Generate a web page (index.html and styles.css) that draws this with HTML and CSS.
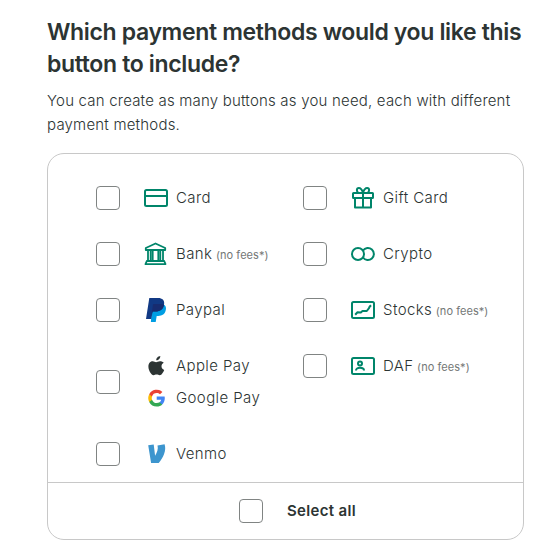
FILE: index.html
```html
<!DOCTYPE html>
<html lang="en">
<head>
  <meta charset="UTF-8" />
  <meta name="viewport" content="width=device-width, initial-scale=1" />
  <title>Payment methods</title>
  <link rel="stylesheet" href="styles.css">
</head>
<body>

  <h1>Which payment methods would you like this button to include?</h1>
  <p class="intro">You can create as many buttons as you need, each with different payment methods.</p>

  <form class="methods-box">
    <div class="methods">

      <!-- Left column -->
      <div class="column">
        <label class="method">
          <input type="checkbox" name="card">
          <span class="option">
            <svg class="icon line" viewBox="0 0 24 24"><rect x="1" y="4" width="22" height="16" rx="1.5"/><path d="M1 10h22"/></svg>
            <span class="name">Card</span>
          </span>
        </label>

        <label class="method">
          <input type="checkbox" name="bank">
          <span class="option">
            <svg class="icon line thin" viewBox="0 0 24 24"><path d="M11.500 1.500 21.200 6v2H1.800V6z"/><path d="M4 8v11M6.700 8v11M16.300 8v11M19 8v11M8.700 8.500v10M14.300 8.500v10"/><path d="M2.800 19h17.400l1.300 3.200h-20z"/></svg>
            <span class="name">Bank <small>(no fees*)</small></span>
          </span>
        </label>

        <label class="method">
          <input type="checkbox" name="paypal">
          <span class="option">
            <svg class="icon" viewBox="0 0 24 24">
              <path fill="#009ee3" d="M8 7h12.500c1.400 1.200 1.800 2.900 1.300 5.100-.9 4.100-3.500 5.900-7.500 5.900h-1.600l-1 6H6.900z"/>
              <path fill="#113984" d="M5.300 0h8.900c4 0 6.500 2.200 5.900 6.200-.7 4.800-3.900 7.300-8.600 7.300H8.700L7.200 21H2z"/>
              <path fill="#172c70" d="M8.900 6.900c.1-.6.500-.9 1.100-.9h6.400c1.400 0 2.600.2 3.700.7-.8 4.500-3.900 6.800-8.600 6.800H8.700L7.700 16z"/>
            </svg>
            <span class="name">Paypal</span>
          </span>
        </label>

        <label class="method">
          <input type="checkbox" name="mobile-pay">
          <span class="pair">
            <span class="option">
              <svg class="icon" viewBox="0 0 24 24"><path fill="#2c3433" d="M16.300 2c.2 2.200-1.800 4.400-4 4.300-.2-2.100 1.800-4.200 4-4.300zM19.700 8.700c-1.500.9-2.200 2-2.200 3.500 0 1.800 1 3 2.700 3.800-.4 1.200-1 2.300-1.800 3.300-.7 1-1.500 2-2.700 2-1.200 0-1.700-.7-3.100-.7s-1.900.7-3.100.7c-1.200 0-2.200-1.200-2.900-2.300C5.200 17 4.400 14.700 4.400 12.500c0-3.400 2.200-5.200 4.300-5.200 1.400 0 2.400.9 3.400.9.900 0 2.100-1 3.900-1 1.500 0 2.900.5 3.700 1.500z"/></svg>
              <span class="name">Apple Pay</span>
            </span>
            <span class="option">
              <svg class="icon" viewBox="0 0 24 24">
                <path fill="#4285f4" d="M20.800 12.200c0-.6-.1-1.200-.2-1.700h-7.900v3.300h4.500a3.900 3.900 0 0 1-1.700 2.500v2.100h2.700c1.600-1.500 2.600-3.600 2.600-6.200z"/>
                <path fill="#34a853" d="M12.700 20.500c2.300 0 4.200-.8 5.500-2.100l-2.700-2.100c-.7.500-1.700.8-2.800.8-2.200 0-4-1.500-4.700-3.400H5.200v2.200a8.400 8.400 0 0 0 7.500 4.600z"/>
                <path fill="#fbbc05" d="M8 13.700a5 5 0 0 1 0-3.300V8.200H5.200a8.400 8.400 0 0 0 0 7.700z"/>
                <path fill="#ea4335" d="M12.700 7c1.300 0 2.400.4 3.300 1.300l2.400-2.400a8.400 8.400 0 0 0-13.200 2.300L8 10.400A5 5 0 0 1 12.700 7z"/>
              </svg>
              <span class="name">Google Pay</span>
            </span>
          </span>
        </label>

        <label class="method">
          <input type="checkbox" name="venmo">
          <span class="option">
            <svg class="icon" viewBox="0 0 24 24"><path fill="#3d95ce" d="M4.200 3.300 9.700 2.500l1.400 11.300c1.900-3.200 3.400-7.100 2.400-10.300l7.100-1.200c1 3.100.8 6.500-.6 9.900-1.100 2.800-3.100 6-5.300 8.800H7.100z"/></svg>
            <span class="name">Venmo</span>
          </span>
        </label>
      </div>

      <!-- Right column -->
      <div class="column">
        <label class="method">
          <input type="checkbox" name="gift-card">
          <span class="option">
            <svg class="icon line" viewBox="0 0 24 24"><rect x="2" y="7" width="20" height="5" rx=".5"/><path d="M4 12v9.500h16V12M12 7v14.500M12 6.800C11 3.500 9.500 2 7.800 2 5.300 2 5.300 5.800 7.500 6.800M12 6.800C13 3.500 14.500 2 16.200 2c2.500 0 2.500 3.800.3 4.800"/></svg>
            <span class="name">Gift Card</span>
          </span>
        </label>

        <label class="method">
          <input type="checkbox" name="crypto">
          <span class="option">
            <svg class="icon line" viewBox="0 0 24 24"><circle cx="7" cy="12" r="6"/><path d="M12 8.500a6 6 0 1 1 0 7"/></svg>
            <span class="name">Crypto</span>
          </span>
        </label>

        <label class="method">
          <input type="checkbox" name="stocks">
          <span class="option">
            <svg class="icon line" viewBox="0 0 24 24"><rect x="1" y="4" width="22" height="16" rx="1.500"/><path d="M4.200 16.700 6.500 14.200l3.300.3 1.700-1.500h4.300l2.200-2.800.6-1.500 1.400-1.500"/></svg>
            <span class="name">Stocks <small>(no fees*)</small></span>
          </span>
        </label>

        <label class="method">
          <input type="checkbox" name="daf">
          <span class="option">
            <svg class="icon line" viewBox="0 0 24 24"><rect x="1" y="4" width="22" height="16" rx="1.500"/><circle cx="9" cy="9.600" r="2"/><path d="M5 16.500c0-1.800 1.500-2.700 4-2.700s4 .9 4 2.700"/></svg>
            <span class="name">DAF <small>(no fees*)</small></span>
          </span>
        </label>
      </div>

    </div>

    <label class="select-all">
      <input type="checkbox" name="all">
      <span>Select all</span>
    </label>
  </form>

</body>
</html>
```
FILE: styles.css
```css
* {
  box-sizing: border-box;
}
body {
  margin: 0;
  padding: 16px 26px 0 47px;
  font-family: Inter, "Liberation Sans", sans-serif;
  font-size: 15px;
  font-weight: 300;
  line-height: 24px;
  letter-spacing: 0.4px;
  background-color: #fff;
  color: #2c3433;
}
h1 {
  margin: 0;
  font-size: 23px;
  font-weight: 600;
  line-height: 32px;
  letter-spacing: -0.35px;
}
.intro {
  margin: 9px 0 16px;
  letter-spacing: 0.2px;
}

/* METHODS BOX */
.methods-box {
  width: 477px;
  border: 1px solid #c8c8c8;
  border-radius: 17px;
}
.methods {
  display: grid;
  grid-template-columns: 207px 1fr;
  padding: 28px 0 12px 48px;
}
.column {
  display: flex;
  flex-direction: column;
  gap: 24px;
}
.method {
  display: flex;
  align-items: center;
  gap: 24px;
}
.option {
  display: flex;
  align-items: center;
  gap: 8px;
  height: 32px;
}
.name {
  white-space: nowrap;
}
.name small {
  margin-left: -1px;
  font-size: 11px;
  font-weight: 400;
  letter-spacing: 0.05px;
  color: #737776;
}
input[type="checkbox"] {
  appearance: none;
  flex: none;
  width: 24px;
  height: 24px;
  margin: 0;
  border: 1px solid #808483;
  border-radius: 4px;
  background: #fff;
}

/* ICONS */
.icon {
  flex: none;
  width: 24px;
  height: 24px;
}
.line {
  fill: none;
  stroke: #00856a;
  stroke-width: 2;
  stroke-linejoin: round;
}
.thin {
  stroke-width: 1.8;
}

.select-all {
  display: flex;
  align-items: center;
  justify-content: center;
  gap: 24px;
  height: 57px;
  padding-left: 24px;
  border-top: 1px solid #c8c8c8;
  font-weight: 600;
  letter-spacing: 0.35px;
}
```
